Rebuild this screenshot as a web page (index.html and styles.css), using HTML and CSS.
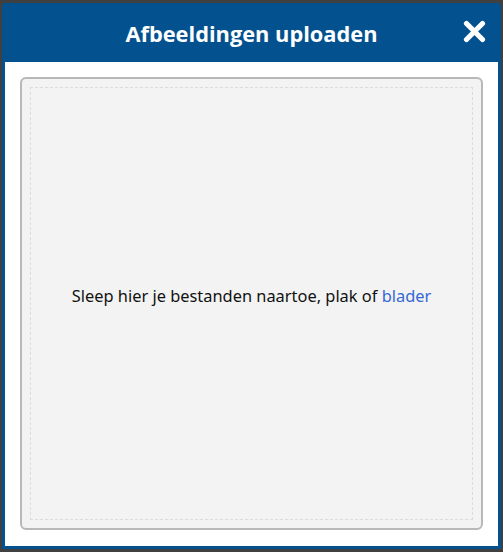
FILE: index.html
```html
<!DOCTYPE html>
<html lang="nl">
<head>
<meta charset="utf-8">
<title>Afbeeldingen uploaden</title>
<link rel="stylesheet" href="styles.css">
</head>
<body>
<div class="dialog">
  <div class="header">
    <h1 class="title">Afbeeldingen uploaden</h1>
    <button class="close" aria-label="Sluiten">
      <svg width="23" height="23" viewBox="0 0 23 23"><path d="M3.5 3.5 L19.5 19.5 M19.5 3.5 L3.5 19.5" stroke="#fff" stroke-width="5.2" stroke-linecap="round"/></svg>
    </button>
  </div>
  <div class="body">
    <div class="dropzone">
      <div class="dropzone-inner">
        <p class="hint">Sleep hier je bestanden naartoe, plak of <a class="browse" href="#">blader</a></p>
      </div>
    </div>
  </div>
</div>
</body>
</html>
```
FILE: styles.css
```css
html, body {
  margin: 0;
  padding: 0;
}
body {
  background: #404040;
  width: 503px;
  height: 552px;
  overflow: hidden;
  padding: 3px 2px 3px 2px;
  box-sizing: border-box;
}
.dialog {
  width: 499px;
  height: 546px;
  background: #03528f;
  border-radius: 4px 4px 0 0;
  display: flex;
  flex-direction: column;
}
.header {
  height: 59px;
  flex: none;
  display: flex;
  align-items: center;
  justify-content: center;
  position: relative;
}
.title {
  margin: 2px 0 0 0;
  font-family: "Open Sans", sans-serif;
  font-weight: 700;
  font-size: 21.8px;
  color: #fff;
  letter-spacing: 0;
}
.close {
  position: absolute;
  right: 14px;
  top: 16px;
  width: 25px;
  height: 25px;
  padding: 0;
  border: 0;
  background: transparent;
  display: flex;
  align-items: center;
  justify-content: center;
}
.body {
  flex: 1;
  background: #fff;
  margin: 0 3px 3px 3px;
  padding: 15px 15px 16px 15px;
  display: flex;
}
.dropzone {
  flex: 1;
  background: #f3f3f3;
  border: 2px solid #b8b8b8;
  border-radius: 6px;
  padding: 8px;
  display: flex;
}
.dropzone-inner {
  flex: 1;
  border: 1px dashed #dcdcdc;
  display: flex;
  align-items: center;
  justify-content: center;
}
.hint {
  margin: 0 0 17px 0;
  font-family: "Noto Sans", sans-serif;
  font-size: 16.4px;
  color: #111;
}
.browse {
  color: #3568d4;
  text-decoration: none;
}
```
